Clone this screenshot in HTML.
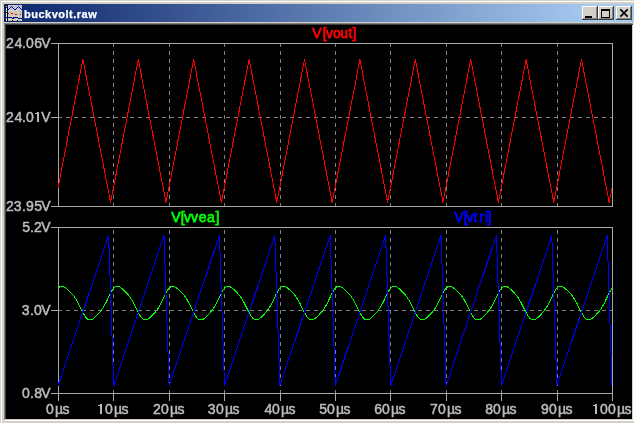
<!DOCTYPE html>
<html><head><meta charset="utf-8"><style>
html,body{margin:0;padding:0;width:634px;height:423px;overflow:hidden;background:#d4d0c8;}
.a{position:absolute;}
svg{position:absolute;left:0;top:0;}
</style></head><body>
<div class="a" style="left:1px;top:1px;width:633px;height:1px;background:#fff"></div>
<div class="a" style="left:1px;top:1px;width:1px;height:422px;background:#fff"></div>
<div class="a" style="left:4px;top:4px;width:630px;height:18px;background:linear-gradient(to right,#0a246a 0%,#a6caf0 94%)"></div>
<div class="a" style="left:4px;top:23px;width:630px;height:1px;background:#808080"></div>
<div class="a" style="left:4px;top:23px;width:1px;height:397px;background:#808080"></div>
<div class="a" style="left:5px;top:24px;width:628px;height:1px;background:#404040"></div>
<div class="a" style="left:5px;top:24px;width:1px;height:395px;background:#404040"></div>
<div class="a" style="left:4px;top:420px;width:630px;height:1px;background:#fff"></div>
<div class="a" style="left:633px;top:23px;width:1px;height:398px;background:#fff"></div>
<div class="a" style="left:6px;top:25px;width:626px;height:394px;background:#000"></div>
<div class="a" style="left:24px;top:8px;height:18px;line-height:13px;font:bold 11px 'Liberation Sans',sans-serif;letter-spacing:0.5px;color:#fff;-webkit-text-stroke:0.25px #fff;white-space:nowrap;will-change:transform">buckvolt.raw</div>
<svg width="634" height="423" viewBox="0 0 634 423">
<g shape-rendering="crispEdges">
<!-- icon -->
<rect x="6" y="5" width="16" height="16" fill="#c4c4bc"/><rect x="8" y="10" width="1" height="1" fill="#dcdcc8"/><rect x="10" y="10" width="1" height="1" fill="#dcdcc8"/><rect x="12" y="10" width="1" height="1" fill="#dcdcc8"/><rect x="14" y="10" width="1" height="1" fill="#dcdcc8"/><rect x="16" y="10" width="1" height="1" fill="#dcdcc8"/><rect x="18" y="10" width="1" height="1" fill="#dcdcc8"/><rect x="20" y="10" width="1" height="1" fill="#dcdcc8"/><rect x="8" y="16" width="1" height="1" fill="#dcdcc8"/><rect x="10" y="16" width="1" height="1" fill="#dcdcc8"/><rect x="12" y="16" width="1" height="1" fill="#dcdcc8"/><rect x="14" y="16" width="1" height="1" fill="#dcdcc8"/><rect x="16" y="16" width="1" height="1" fill="#dcdcc8"/><rect x="18" y="16" width="1" height="1" fill="#dcdcc8"/><rect x="20" y="16" width="1" height="1" fill="#dcdcc8"/><rect x="8" y="19" width="1" height="1" fill="#dcdcc8"/><rect x="10" y="19" width="1" height="1" fill="#dcdcc8"/><rect x="12" y="19" width="1" height="1" fill="#dcdcc8"/><rect x="14" y="19" width="1" height="1" fill="#dcdcc8"/><rect x="16" y="19" width="1" height="1" fill="#dcdcc8"/><rect x="18" y="19" width="1" height="1" fill="#dcdcc8"/><rect x="20" y="19" width="1" height="1" fill="#dcdcc8"/><rect x="9" y="5" width="1" height="1" fill="#d0d0c4"/><rect x="13" y="5" width="1" height="1" fill="#d0d0c4"/><rect x="17" y="5" width="1" height="1" fill="#d0d0c4"/><rect x="21" y="5" width="1" height="1" fill="#d0d0c4"/><rect x="9" y="6" width="1" height="1" fill="#d0d0c4"/><rect x="13" y="6" width="1" height="1" fill="#d0d0c4"/><rect x="17" y="6" width="1" height="1" fill="#d0d0c4"/><rect x="21" y="6" width="1" height="1" fill="#d0d0c4"/><rect x="9" y="7" width="1" height="1" fill="#d0d0c4"/><rect x="13" y="7" width="1" height="1" fill="#d0d0c4"/><rect x="17" y="7" width="1" height="1" fill="#d0d0c4"/><rect x="21" y="7" width="1" height="1" fill="#d0d0c4"/><rect x="9" y="8" width="1" height="1" fill="#d0d0c4"/><rect x="13" y="8" width="1" height="1" fill="#d0d0c4"/><rect x="17" y="8" width="1" height="1" fill="#d0d0c4"/><rect x="21" y="8" width="1" height="1" fill="#d0d0c4"/><rect x="9" y="9" width="1" height="1" fill="#d0d0c4"/><rect x="13" y="9" width="1" height="1" fill="#d0d0c4"/><rect x="17" y="9" width="1" height="1" fill="#d0d0c4"/><rect x="21" y="9" width="1" height="1" fill="#d0d0c4"/><rect x="9" y="11" width="1" height="1" fill="#d0d0c4"/><rect x="13" y="11" width="1" height="1" fill="#d0d0c4"/><rect x="17" y="11" width="1" height="1" fill="#d0d0c4"/><rect x="21" y="11" width="1" height="1" fill="#d0d0c4"/><rect x="9" y="12" width="1" height="1" fill="#d0d0c4"/><rect x="13" y="12" width="1" height="1" fill="#d0d0c4"/><rect x="17" y="12" width="1" height="1" fill="#d0d0c4"/><rect x="21" y="12" width="1" height="1" fill="#d0d0c4"/><rect x="9" y="13" width="1" height="1" fill="#d0d0c4"/><rect x="13" y="13" width="1" height="1" fill="#d0d0c4"/><rect x="17" y="13" width="1" height="1" fill="#d0d0c4"/><rect x="21" y="13" width="1" height="1" fill="#d0d0c4"/><rect x="9" y="14" width="1" height="1" fill="#d0d0c4"/><rect x="13" y="14" width="1" height="1" fill="#d0d0c4"/><rect x="17" y="14" width="1" height="1" fill="#d0d0c4"/><rect x="21" y="14" width="1" height="1" fill="#d0d0c4"/><rect x="9" y="15" width="1" height="1" fill="#d0d0c4"/><rect x="13" y="15" width="1" height="1" fill="#d0d0c4"/><rect x="17" y="15" width="1" height="1" fill="#d0d0c4"/><rect x="21" y="15" width="1" height="1" fill="#d0d0c4"/><rect x="9" y="17" width="1" height="1" fill="#d0d0c4"/><rect x="13" y="17" width="1" height="1" fill="#d0d0c4"/><rect x="17" y="17" width="1" height="1" fill="#d0d0c4"/><rect x="21" y="17" width="1" height="1" fill="#d0d0c4"/><rect x="9" y="18" width="1" height="1" fill="#d0d0c4"/><rect x="13" y="18" width="1" height="1" fill="#d0d0c4"/><rect x="17" y="18" width="1" height="1" fill="#d0d0c4"/><rect x="21" y="18" width="1" height="1" fill="#d0d0c4"/><rect x="9" y="20" width="1" height="1" fill="#d0d0c4"/><rect x="13" y="20" width="1" height="1" fill="#d0d0c4"/><rect x="17" y="20" width="1" height="1" fill="#d0d0c4"/><rect x="21" y="20" width="1" height="1" fill="#d0d0c4"/><rect x="6" y="5" width="1" height="16" fill="#f0f0f0"/><rect x="6" y="5" width="1" height="1" fill="#000"/><rect x="6" y="7" width="1" height="1" fill="#000"/><rect x="6" y="12" width="1" height="1" fill="#000"/><rect x="6" y="17" width="1" height="1" fill="#000"/><rect x="7" y="5" width="1" height="16" fill="#000"/><rect x="8" y="9" width="1" height="1" fill="#0000ff"/><rect x="9" y="8" width="1" height="1" fill="#0000ff"/><rect x="10" y="7" width="1" height="1" fill="#0000ff"/><rect x="11" y="6" width="1" height="1" fill="#0000ff"/><rect x="12" y="7" width="1" height="1" fill="#0000ff"/><rect x="13" y="8" width="1" height="1" fill="#0000ff"/><rect x="14" y="9" width="1" height="1" fill="#0000ff"/><rect x="15" y="9" width="1" height="1" fill="#0000ff"/><rect x="16" y="8" width="1" height="1" fill="#0000ff"/><rect x="17" y="7" width="1" height="1" fill="#0000ff"/><rect x="18" y="6" width="1" height="1" fill="#0000ff"/><rect x="19" y="7" width="1" height="1" fill="#0000ff"/><rect x="20" y="8" width="1" height="1" fill="#0000ff"/><rect x="21" y="9" width="1" height="1" fill="#0000ff"/><rect x="8" y="13" width="1" height="1" fill="#ff0000"/><rect x="11" y="13" width="2" height="1" fill="#ff0000"/><rect x="15" y="14" width="2" height="1" fill="#ff0000"/><rect x="20" y="14" width="1" height="1" fill="#ff0000"/><rect x="8" y="17" width="4" height="1" fill="#000080"/><rect x="13" y="17" width="5" height="1" fill="#000080"/><rect x="12" y="18" width="2" height="1" fill="#000080"/><rect x="18" y="18" width="4" height="1" fill="#000080"/><rect x="12" y="20" width="1" height="1" fill="#000"/><rect x="17" y="20" width="1" height="1" fill="#000"/>
<!-- caption buttons -->
<g>
<rect x="582" y="6" width="16" height="14" fill="#404040"/><rect x="582" y="6" width="15" height="13" fill="#fff"/><rect x="583" y="7" width="14" height="12" fill="#808080"/><rect x="583" y="7" width="13" height="11" fill="#d4d0c8"/><rect x="598" y="6" width="16" height="14" fill="#404040"/><rect x="598" y="6" width="15" height="13" fill="#fff"/><rect x="599" y="7" width="14" height="12" fill="#808080"/><rect x="599" y="7" width="13" height="11" fill="#d4d0c8"/><rect x="616" y="6" width="16" height="14" fill="#404040"/><rect x="616" y="6" width="15" height="13" fill="#fff"/><rect x="617" y="7" width="14" height="12" fill="#808080"/><rect x="617" y="7" width="13" height="11" fill="#d4d0c8"/>
<rect x="585" y="16" width="7" height="2" fill="#000"/>
<rect x="601" y="9" width="9" height="9" fill="#000"/><rect x="602" y="11" width="7" height="6" fill="#d4d0c8"/>
<path d="M620.3,9.3 L627.7,16.7 M627.7,9.3 L620.3,16.7" stroke="#000" stroke-width="1.8" shape-rendering="geometricPrecision"/>
</g>
<line x1="113.5" y1="207" x2="113.5" y2="43" stroke="#808080" stroke-dasharray="4 4"/><line x1="169.5" y1="207" x2="169.5" y2="43" stroke="#808080" stroke-dasharray="4 4"/><line x1="224.5" y1="207" x2="224.5" y2="43" stroke="#808080" stroke-dasharray="4 4"/><line x1="280.5" y1="207" x2="280.5" y2="43" stroke="#808080" stroke-dasharray="4 4"/><line x1="335.5" y1="207" x2="335.5" y2="43" stroke="#808080" stroke-dasharray="4 4"/><line x1="390.5" y1="207" x2="390.5" y2="43" stroke="#808080" stroke-dasharray="4 4"/><line x1="446.5" y1="207" x2="446.5" y2="43" stroke="#808080" stroke-dasharray="4 4"/><line x1="501.5" y1="207" x2="501.5" y2="43" stroke="#808080" stroke-dasharray="4 4"/><line x1="557.5" y1="207" x2="557.5" y2="43" stroke="#808080" stroke-dasharray="4 4"/><line x1="58" y1="117.5" x2="612" y2="117.5" stroke="#808080" stroke-dasharray="4 4"/><rect x="58.5" y="43.5" width="554" height="163" fill="none" stroke="#a8a8a8"/><line x1="51" y1="43.5" x2="58" y2="43.5" stroke="#a8a8a8" /><line x1="51" y1="117.5" x2="58" y2="117.5" stroke="#a8a8a8" /><line x1="51" y1="206.5" x2="58" y2="206.5" stroke="#a8a8a8" /><line x1="113.5" y1="394" x2="113.5" y2="227" stroke="#808080" stroke-dasharray="4 4"/><line x1="169.5" y1="394" x2="169.5" y2="227" stroke="#808080" stroke-dasharray="4 4"/><line x1="224.5" y1="394" x2="224.5" y2="227" stroke="#808080" stroke-dasharray="4 4"/><line x1="280.5" y1="394" x2="280.5" y2="227" stroke="#808080" stroke-dasharray="4 4"/><line x1="335.5" y1="394" x2="335.5" y2="227" stroke="#808080" stroke-dasharray="4 4"/><line x1="390.5" y1="394" x2="390.5" y2="227" stroke="#808080" stroke-dasharray="4 4"/><line x1="446.5" y1="394" x2="446.5" y2="227" stroke="#808080" stroke-dasharray="4 4"/><line x1="501.5" y1="394" x2="501.5" y2="227" stroke="#808080" stroke-dasharray="4 4"/><line x1="557.5" y1="394" x2="557.5" y2="227" stroke="#808080" stroke-dasharray="4 4"/><line x1="58" y1="310.5" x2="612" y2="310.5" stroke="#808080" stroke-dasharray="4 4"/><rect x="58.5" y="227.5" width="554" height="166" fill="none" stroke="#a8a8a8"/><line x1="51" y1="227.5" x2="58" y2="227.5" stroke="#a8a8a8" /><line x1="51" y1="310.5" x2="58" y2="310.5" stroke="#a8a8a8" /><line x1="51" y1="393.5" x2="58" y2="393.5" stroke="#a8a8a8" /><line x1="58.5" y1="394" x2="58.5" y2="401" stroke="#a8a8a8" /><line x1="113.5" y1="394" x2="113.5" y2="401" stroke="#a8a8a8" /><line x1="169.5" y1="394" x2="169.5" y2="401" stroke="#a8a8a8" /><line x1="224.5" y1="394" x2="224.5" y2="401" stroke="#a8a8a8" /><line x1="280.5" y1="394" x2="280.5" y2="401" stroke="#a8a8a8" /><line x1="335.5" y1="394" x2="335.5" y2="401" stroke="#a8a8a8" /><line x1="390.5" y1="394" x2="390.5" y2="401" stroke="#a8a8a8" /><line x1="446.5" y1="394" x2="446.5" y2="401" stroke="#a8a8a8" /><line x1="501.5" y1="394" x2="501.5" y2="401" stroke="#a8a8a8" /><line x1="557.5" y1="394" x2="557.5" y2="401" stroke="#a8a8a8" /><line x1="612.5" y1="394" x2="612.5" y2="401" stroke="#a8a8a8" />
</g>
<g shape-rendering="crispEdges" fill="none" stroke-width="1" stroke-linejoin="miter">
<polyline points="58.0,288.5 59.0,287.4 60.0,286.7 61.0,286.3 62.0,286.2 63.0,286.4 64.0,286.8 65.0,287.4 66.0,288.2 67.0,289.0 68.0,289.9 69.0,290.8 70.0,291.8 71.0,292.8 72.0,293.9 73.0,295.1 74.0,296.3 75.0,297.8 76.0,299.3 77.0,301.0 78.0,302.9 79.0,304.8 80.0,306.8 81.0,308.9 82.0,310.9 83.0,312.8 84.0,314.6 85.0,316.2 86.0,317.6 87.0,318.6 88.0,319.4 89.0,319.8 90.0,319.9 91.0,319.8 92.0,319.4 93.0,318.8 94.0,318.1 95.0,317.2 96.0,316.2 97.0,315.2 98.0,314.2 99.0,313.1 100.0,311.9 101.0,310.7 102.0,309.3 103.0,307.8 104.0,306.2 105.0,304.4 106.0,302.5 107.0,300.5 108.0,298.4 109.0,296.3 110.0,294.2 111.0,292.3 112.0,290.5 113.0,289.0 114.0,287.8 115.0,287.0 116.0,286.4 117.0,286.2 118.0,286.3 119.0,286.6 120.0,287.2 121.0,287.9 122.0,288.6 123.0,289.5 124.0,290.4 125.0,291.4 126.0,292.4 127.0,293.4 128.0,294.6 129.0,295.8 130.0,297.2 131.0,298.7 132.0,300.3 133.0,302.1 134.0,304.0 135.0,306.0 136.0,308.1 137.0,310.1 138.0,312.1 139.0,313.9 140.0,315.6 141.0,317.1 142.0,318.2 143.0,319.1 144.0,319.7 145.0,319.9 146.0,319.9 147.0,319.6 148.0,319.1 149.0,318.4 150.0,317.5 151.0,316.6 152.0,315.6 153.0,314.6 154.0,313.5 155.0,312.4 156.0,311.2 157.0,309.9 158.0,308.4 159.0,306.9 160.0,305.2 161.0,303.3 162.0,301.3 163.0,299.2 164.0,297.1 165.0,295.0 166.0,293.0 167.0,291.2 168.0,289.6 169.0,288.3 170.0,287.3 171.0,286.6 172.0,286.3 173.0,286.2 174.0,286.5 175.0,286.9 176.0,287.6 177.0,288.3 178.0,289.2 179.0,290.1 180.0,291.0 181.0,292.0 182.0,293.0 183.0,294.1 184.0,295.3 185.0,296.6 186.0,298.1 187.0,299.6 188.0,301.4 189.0,303.2 190.0,305.2 191.0,307.2 192.0,309.3 193.0,311.3 194.0,313.2 195.0,315.0 196.0,316.5 197.0,317.8 198.0,318.8 199.0,319.5 200.0,319.8 201.0,319.9 202.0,319.7 203.0,319.3 204.0,318.7 205.0,317.9 206.0,317.0 207.0,316.0 208.0,315.0 209.0,313.9 210.0,312.8 211.0,311.7 212.0,310.4 213.0,309.0 214.0,307.5 215.0,305.9 216.0,304.1 217.0,302.1 218.0,300.1 219.0,298.0 220.0,295.8 221.0,293.8 222.0,291.9 223.0,290.2 224.0,288.8 225.0,287.6 226.0,286.8 227.0,286.4 228.0,286.2 229.0,286.3 230.0,286.7 231.0,287.3 232.0,288.0 233.0,288.8 234.0,289.7 235.0,290.6 236.0,291.6 237.0,292.6 238.0,293.7 239.0,294.8 240.0,296.1 241.0,297.5 242.0,299.0 243.0,300.7 244.0,302.5 245.0,304.4 246.0,306.4 247.0,308.5 248.0,310.5 249.0,312.5 250.0,314.3 251.0,315.9 252.0,317.3 253.0,318.4 254.0,319.2 255.0,319.7 256.0,319.9 257.0,319.8 258.0,319.5 259.0,318.9 260.0,318.2 261.0,317.4 262.0,316.4 263.0,315.4 264.0,314.4 265.0,313.3 266.0,312.1 267.0,310.9 268.0,309.6 269.0,308.1 270.0,306.5 271.0,304.8 272.0,302.9 273.0,300.9 274.0,298.8 275.0,296.7 276.0,294.6 277.0,292.6 278.0,290.8 279.0,289.3 280.0,288.0 281.0,287.1 282.0,286.5 283.0,286.2 284.0,286.3 285.0,286.6 286.0,287.0 287.0,287.7 288.0,288.5 289.0,289.3 290.0,290.2 291.0,291.2 292.0,292.2 293.0,293.2 294.0,294.3 295.0,295.6 296.0,296.9 297.0,298.4 298.0,300.0 299.0,301.7 300.0,303.6 301.0,305.6 302.0,307.7 303.0,309.7 304.0,311.7 305.0,313.6 306.0,315.3 307.0,316.8 308.0,318.0 309.0,318.9 310.0,319.6 311.0,319.9 312.0,319.9 313.0,319.7 314.0,319.2 315.0,318.5 316.0,317.7 317.0,316.8 318.0,315.8 319.0,314.8 320.0,313.7 321.0,312.6 322.0,311.4 323.0,310.1 324.0,308.7 325.0,307.2 326.0,305.5 327.0,303.7 328.0,301.7 329.0,299.6 330.0,297.5 331.0,295.4 332.0,293.4 333.0,291.5 334.0,289.9 335.0,288.5 336.0,287.4 337.0,286.7 338.0,286.3 339.0,286.2 340.0,286.4 341.0,286.8 342.0,287.4 343.0,288.2 344.0,289.0 345.0,289.9 346.0,290.8 347.0,291.8 348.0,292.8 349.0,293.9 350.0,295.1 351.0,296.3 352.0,297.8 353.0,299.3 354.0,301.0 355.0,302.9 356.0,304.8 357.0,306.8 358.0,308.9 359.0,310.9 360.0,312.8 361.0,314.6 362.0,316.2 363.0,317.6 364.0,318.6 365.0,319.4 366.0,319.8 367.0,319.9 368.0,319.8 369.0,319.4 370.0,318.8 371.0,318.1 372.0,317.2 373.0,316.2 374.0,315.2 375.0,314.2 376.0,313.1 377.0,311.9 378.0,310.7 379.0,309.3 380.0,307.8 381.0,306.2 382.0,304.4 383.0,302.5 384.0,300.5 385.0,298.4 386.0,296.3 387.0,294.2 388.0,292.3 389.0,290.5 390.0,289.0 391.0,287.8 392.0,287.0 393.0,286.4 394.0,286.2 395.0,286.3 396.0,286.6 397.0,287.2 398.0,287.9 399.0,288.6 400.0,289.5 401.0,290.4 402.0,291.4 403.0,292.4 404.0,293.4 405.0,294.6 406.0,295.8 407.0,297.2 408.0,298.7 409.0,300.3 410.0,302.1 411.0,304.0 412.0,306.0 413.0,308.1 414.0,310.1 415.0,312.1 416.0,313.9 417.0,315.6 418.0,317.1 419.0,318.2 420.0,319.1 421.0,319.7 422.0,319.9 423.0,319.9 424.0,319.6 425.0,319.1 426.0,318.4 427.0,317.5 428.0,316.6 429.0,315.6 430.0,314.6 431.0,313.5 432.0,312.4 433.0,311.2 434.0,309.9 435.0,308.4 436.0,306.9 437.0,305.2 438.0,303.3 439.0,301.3 440.0,299.2 441.0,297.1 442.0,295.0 443.0,293.0 444.0,291.2 445.0,289.6 446.0,288.3 447.0,287.3 448.0,286.6 449.0,286.3 450.0,286.2 451.0,286.5 452.0,286.9 453.0,287.6 454.0,288.3 455.0,289.2 456.0,290.1 457.0,291.0 458.0,292.0 459.0,293.0 460.0,294.1 461.0,295.3 462.0,296.6 463.0,298.1 464.0,299.6 465.0,301.4 466.0,303.2 467.0,305.2 468.0,307.2 469.0,309.3 470.0,311.3 471.0,313.2 472.0,315.0 473.0,316.5 474.0,317.8 475.0,318.8 476.0,319.5 477.0,319.8 478.0,319.9 479.0,319.7 480.0,319.3 481.0,318.7 482.0,317.9 483.0,317.0 484.0,316.0 485.0,315.0 486.0,313.9 487.0,312.8 488.0,311.7 489.0,310.4 490.0,309.0 491.0,307.5 492.0,305.9 493.0,304.1 494.0,302.1 495.0,300.1 496.0,298.0 497.0,295.8 498.0,293.8 499.0,291.9 500.0,290.2 501.0,288.8 502.0,287.6 503.0,286.8 504.0,286.4 505.0,286.2 506.0,286.3 507.0,286.7 508.0,287.3 509.0,288.0 510.0,288.8 511.0,289.7 512.0,290.6 513.0,291.6 514.0,292.6 515.0,293.7 516.0,294.8 517.0,296.1 518.0,297.5 519.0,299.0 520.0,300.7 521.0,302.5 522.0,304.4 523.0,306.4 524.0,308.5 525.0,310.5 526.0,312.5 527.0,314.3 528.0,315.9 529.0,317.3 530.0,318.4 531.0,319.2 532.0,319.7 533.0,319.9 534.0,319.8 535.0,319.5 536.0,318.9 537.0,318.2 538.0,317.4 539.0,316.4 540.0,315.4 541.0,314.4 542.0,313.3 543.0,312.1 544.0,310.9 545.0,309.6 546.0,308.1 547.0,306.5 548.0,304.8 549.0,302.9 550.0,300.9 551.0,298.8 552.0,296.7 553.0,294.6 554.0,292.6 555.0,290.8 556.0,289.3 557.0,288.0 558.0,287.1 559.0,286.5 560.0,286.2 561.0,286.3 562.0,286.6 563.0,287.0 564.0,287.7 565.0,288.5 566.0,289.3 567.0,290.2 568.0,291.2 569.0,292.2 570.0,293.2 571.0,294.3 572.0,295.6 573.0,296.9 574.0,298.4 575.0,300.0 576.0,301.7 577.0,303.6 578.0,305.6 579.0,307.7 580.0,309.7 581.0,311.7 582.0,313.6 583.0,315.3 584.0,316.8 585.0,318.0 586.0,318.9 587.0,319.6 588.0,319.9 589.0,319.9 590.0,319.7 591.0,319.2 592.0,318.5 593.0,317.7 594.0,316.8 595.0,315.8 596.0,314.8 597.0,313.7 598.0,312.6 599.0,311.4 600.0,310.1 601.0,308.7 602.0,307.2 603.0,305.5 604.0,303.7 605.0,301.7 606.0,299.6 607.0,297.5 608.0,295.4 609.0,293.4 610.0,291.5 611.0,289.9 612.0,288.5" stroke="#00ff00"/>
<polyline points="58.0,385.5 108.6,235.5 113.7,385.5 164.0,235.5 169.1,385.5 219.4,235.5 224.5,385.5 274.8,235.5 279.9,385.5 330.2,235.5 335.3,385.5 385.6,235.5 390.7,385.5 441.0,235.5 446.1,385.5 496.4,235.5 501.5,385.5 551.8,235.5 556.9,385.5 607.2,235.5 612.0,385.5" stroke="#0000ff"/>
<polyline points="58.0,188.0 82.9,59.5 110.6,202.5 138.3,59.5 166.0,202.5 193.7,59.5 221.4,202.5 249.1,59.5 276.8,202.5 304.5,59.5 332.2,202.5 359.9,59.5 387.6,202.5 415.3,59.5 443.0,202.5 470.7,59.5 498.4,202.5 526.1,59.5 553.8,202.5 581.5,59.5 609.2,202.5 612.0,188.0" stroke="#ff0000"/>
</g>
</svg>
<div class="a" style="left:0;top:0;width:634px;height:423px;will-change:transform">
<svg width="634" height="423" viewBox="0 0 634 423">
<g font-family="Liberation Sans, sans-serif" font-size="14" fill="#bcbcbc" stroke="#bcbcbc" stroke-width="0.5">
<text x="6.07" y="48" >2</text><text x="14.58" y="48" >4</text><text x="22.02" y="48" >.</text><text x="26.08" y="48" >0</text><text x="34.17" y="48" >6</text><text x="41.32" y="48" >V</text><text x="6.07" y="122" >2</text><text x="14.58" y="122" >4</text><text x="22.02" y="122" >.</text><text x="26.08" y="122" >0</text><rect x="37" y="112" width="2" height="10" fill="#b8b8b8" stroke="none"/><rect x="35" y="113" width="2" height="1" fill="#b8b8b8" stroke="none"/><rect x="36" y="112.5" width="1" height="1" fill="#b8b8b8" stroke="none" opacity="0.5"/><text x="41.32" y="122" >V</text><text x="6.07" y="211" >2</text><text x="13.78" y="211" >3</text><text x="22.02" y="211" >.</text><text x="26.01" y="211" >9</text><text x="34.15" y="211" >5</text><text x="41.32" y="211" >V</text><text x="22.15" y="232" >5</text><text x="30.02" y="232" >.</text><text x="34.07" y="232" >2</text><text x="41.32" y="232" >V</text><text x="21.78" y="315" >3</text><text x="30.02" y="315" >.</text><text x="34.08" y="315" >0</text><text x="41.32" y="315" >V</text><text x="22.08" y="398" >0</text><text x="30.02" y="398" >.</text><text x="34.15" y="398" >8</text><text x="41.32" y="398" >V</text><text x="46.08" y="414" >0</text><text x="54.96" y="414" >µ</text><text x="62.51" y="414" >s</text><rect x="100.0" y="404" width="2" height="10" fill="#b8b8b8" stroke="none"/><rect x="98.0" y="405" width="2" height="1" fill="#b8b8b8" stroke="none"/><rect x="99.0" y="404.5" width="1" height="1" fill="#b8b8b8" stroke="none" opacity="0.5"/><text x="105.08" y="414" >0</text><text x="113.96" y="414" >µ</text><text x="121.51" y="414" >s</text><text x="153.07" y="414" >2</text><text x="161.08" y="414" >0</text><text x="169.96" y="414" >µ</text><text x="177.51" y="414" >s</text><text x="207.78" y="414" >3</text><text x="216.08" y="414" >0</text><text x="224.96" y="414" >µ</text><text x="232.51" y="414" >s</text><text x="264.58" y="414" >4</text><text x="272.08" y="414" >0</text><text x="280.96" y="414" >µ</text><text x="288.51" y="414" >s</text><text x="319.15" y="414" >5</text><text x="327.08" y="414" >0</text><text x="335.96" y="414" >µ</text><text x="343.51" y="414" >s</text><text x="374.17" y="414" >6</text><text x="382.08" y="414" >0</text><text x="390.96" y="414" >µ</text><text x="398.51" y="414" >s</text><text x="429.92" y="414" >7</text><text x="438.08" y="414" >0</text><text x="446.96" y="414" >µ</text><text x="454.51" y="414" >s</text><text x="485.15" y="414" >8</text><text x="493.08" y="414" >0</text><text x="501.96" y="414" >µ</text><text x="509.51" y="414" >s</text><text x="541.01" y="414" >9</text><text x="549.08" y="414" >0</text><text x="557.96" y="414" >µ</text><text x="565.51" y="414" >s</text><rect x="595.0" y="404" width="2" height="10" fill="#b8b8b8" stroke="none"/><rect x="593.0" y="405" width="2" height="1" fill="#b8b8b8" stroke="none"/><rect x="594.0" y="404.5" width="1" height="1" fill="#b8b8b8" stroke="none" opacity="0.5"/><text x="600.08" y="414" >0</text><text x="608.08" y="414" >0</text><text x="616.96" y="414" >µ</text><text x="624.51" y="414" >s</text><text x="312.32 322.63 326.02 333.09 340.21 348.50 352.52" y="38" fill="#ff0000" stroke="#ff0000" stroke-width="0.75">V[vout]</text><text x="171.32 180.63 184.02 191.02 198.76 207.02 215.52" y="222" fill="#00ff00" stroke="#00ff00" stroke-width="0.75">V[vvea]</text><text x="454.32 463.63 466.52 473.50 479.50 484.91 487.52" y="222" fill="#0000ff" stroke="#0000ff" stroke-width="0.75">V[vtri]</text>
</g>
</svg>
</div>
</body></html>
